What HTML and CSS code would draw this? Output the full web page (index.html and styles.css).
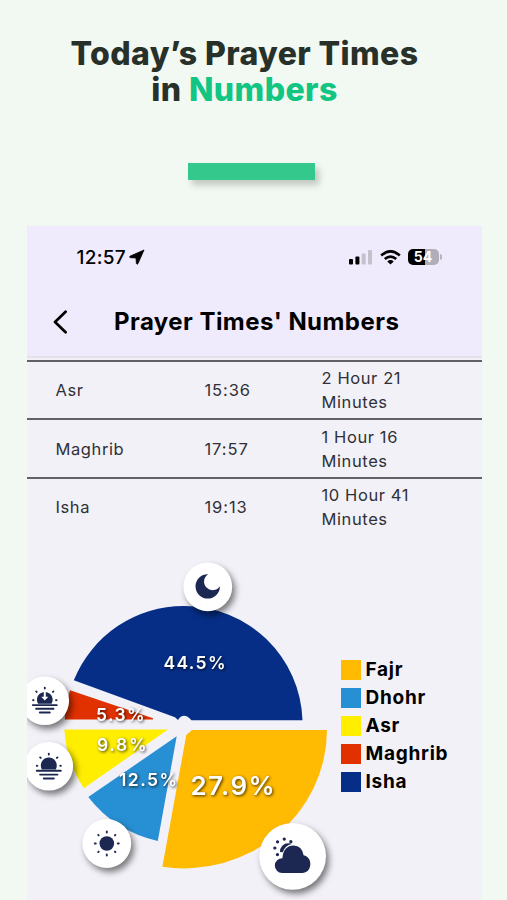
FILE: index.html
```html
<!DOCTYPE html>
<html lang="en">
<head>
<meta charset="UTF-8" />
<meta name="viewport" content="width=device-width, initial-scale=1" />
<title>Prayer Times' Numbers</title>
<link rel="stylesheet" href="styles.css">
</head>
<body>

<h1 class="headline">Today’s Prayer Times<br />in <span class="accent">Numbers</span></h1>
<div class="bar"></div>

<div class="phone">

  <div class="top">
    <div class="status">
      <div class="clock">
        <span>12:57</span>
        <svg width="16" height="16" viewBox="0 0 16 16"><path d="M15 1 L1 7.2 Q.2 8.4 1.4 8.7 L7 9 L7.4 14.6 Q8 15.9 8.9 14.7 Z" stroke="#000" stroke-width=".8" /></svg>
      </div>
      <div class="signals">
        <svg width="24" height="15" viewBox="0 0 24 15">
          <rect x="0" y="9" width="4" height="5.5" rx="1" />
          <rect x="6.4" y="6.5" width="4" height="8" rx="1" />
          <rect x="12.7" y="3.4" width="4" height="11.1" rx="1" fill="#c5c0ce" />
          <rect x="19" y="0" width="4" height="14.5" rx="1" fill="#c5c0ce" />
        </svg>
        <svg class="wifi" width="21" height="15" viewBox="0 0 21 15" fill="none" stroke="#000" stroke-width="2.7">
          <path d="M1.2 5.6 Q10.5 -2.8 19.8 5.6" />
          <path d="M4.8 9.1 Q10.5 4 16.2 9.1" />
          <path d="M7.3 11.4 Q10.5 8.8 13.7 11.4 L10.5 14.6 Z" fill="#000" stroke="none" />
        </svg>
        <div class="battery">54</div>
        <div class="battery-tip"></div>
      </div>
    </div>
    <div class="nav">
      <svg width="15" height="24" viewBox="0 0 15 24" fill="none" stroke="#000" stroke-width="2.7" stroke-linecap="round" stroke-linejoin="round"><path d="M12.6 1.8 L2 12 L12.6 22.2" /></svg>
      <h2>Prayer Times' Numbers</h2>
    </div>
  </div>

  <div class="times">
    <div class="row"><span>Asr</span><span class="hour">15:36</span><span>2 Hour 21<br />Minutes</span></div>
    <div class="row"><span>Maghrib</span><span class="hour">17:57</span><span>1 Hour 16<br />Minutes</span></div>
    <div class="row"><span>Isha</span><span class="hour">19:13</span><span>10 Hour 41<br />Minutes</span></div>
  </div>

  <div class="stats">
    <svg class="pie" width="310" height="360" viewBox="26 540 310 360">
      <!-- slices -->
      <path fill="#062e87" d="M302.5 720.3 A118.2 118.2 0 0 0 184.5 606 A118.4 118.4 0 0 0 73.8 680.3 L175 717.3 L178 720 Q183.5 711.5 191.5 720.3 Z" />
      <path fill="#e13100" d="M70 690.2 L153 718.2 V719.4 H64.7 Q65.4 704 70 690.2 Z" />
      <path fill="#ffee00" d="M64.4 729.5 H168 L83.8 788.3 Q66 761 64.4 729.5 Z" />
      <path fill="#278fd3" d="M176.7 736.3 L88.3 797 Q114.5 831 157.8 841 Z" />
      <path fill="#ffba02" d="M192 730 H327 A143 139 0 0 1 162.4 866.8 L186.3 735 Z" />

      <!-- percentages -->
      <g class="percent">
        <text x="163.5" y="668.5" textLength="62">44.5%</text>
        <text x="96" y="720.5" textLength="48.5">5.3%</text>
        <text x="97" y="750.5" textLength="49.5">9.8%</text>
        <text x="119" y="786" textLength="58">12.5%</text>
        <text class="big" x="190.5" y="794.5" textLength="84">27.9%</text>
      </g>

      <!-- moon -->
      <g transform="translate(207.8 586.8)">
        <circle class="badge" r="24.4" />
        <path class="ink" d="M.4 -12.6 A12.2 12.2 0 1 0 12.1 -.6 A8.6 8.6 0 1 1 .4 -12.6 Z" />
      </g>

      <!-- sunset -->
      <g transform="translate(44.8 700.8)">
        <circle class="badge" r="24.3" />
        <path class="ink" d="M-6.8 3 A7.9 7.9 0 1 1 6.8 3 Z" />
        <path d="M-1 -9 H1 V-4 H3.5 L0 -.2 L-3.5 -4 H-1 Z" fill="#fff" />
        <path class="stroke" d="M-12 4.3 H12 M-8.7 8 H8.7 M-5 11.7 H5" />
        <path class="rays" d="M0 -13.2 V-12.3 M-8.6 -9.4 L-8.1 -8.9 M8.6 -9.4 L8.1 -8.9 M-11.8 -.7 L-11.2 -.6 M11.8 -.7 L11.2 -.6" />
      </g>

      <!-- sun over horizon -->
      <g transform="translate(48.8 766.2)">
        <circle class="badge" r="24.3" />
        <path class="ink" d="M-7 3.2 A8 8 0 1 1 7 3.2 Z" />
        <path class="stroke" d="M-12 4.5 H12 M-8.7 8.4 H8.7 M-5 12.3 H5" />
        <path class="rays" d="M0 -12.6 V-11.7 M-8.6 -8.8 L-8.1 -8.3 M8.6 -8.8 L8.1 -8.3 M-12 -.4 L-11.4 -.3 M12 -.4 L11.4 -.3" />
      </g>

      <!-- sun -->
      <g transform="translate(106.8 843.5)">
        <circle class="badge" r="24.4" />
        <circle class="ink" r="7.3" />
        <path class="rays" d="M0 -12 V-11 M0 12 V11 M-12 0 H-11 M12 0 H11 M-8.6 -8.6 L-8.1 -8.1 M8.6 -8.6 L8.1 -8.1 M-8.6 8.6 L-8.1 8.1 M8.6 8.6 L8.1 8.1" />
      </g>

      <!-- cloud and sun -->
      <g transform="translate(292.6 856.3)">
        <circle class="badge" r="33.4" />
        <path class="ink" d="M-10.5 16.8 A7.4 7.4 0 0 1 -10.2 2 Q-9.2 -10.5 1 -10.7 Q9.3 -10.5 11 -1 C20.5 .5 20 16.8 9.5 16.8 Z" />
        <path class="ink" d="M-12.6 -4.2 A8.2 8.2 0 0 1 -4 -13 Q-2 -13 -.8 -12.2 Q-7.5 -11 -9.8 -4 Z" />
        <path class="rays dots" d="M-15.2 -1.7 h.1 M-17.8 -8.3 h.1 M-15.1 -14.5 h.1 M-8.4 -17.2 h.1 M-1.8 -14.6 h.1" />
      </g>
    </svg>

    <ul class="legend">
      <li><i class="fajr"></i>Fajr</li>
      <li><i class="dhohr"></i>Dhohr</li>
      <li><i class="asr"></i>Asr</li>
      <li><i class="maghrib"></i>Maghrib</li>
      <li><i class="isha"></i>Isha</li>
    </ul>
  </div>

</div>

</body>
</html>
```
FILE: styles.css
```css
* {
  box-sizing: border-box;
}
body {
  margin: 0;
  height: 900px;
  overflow: hidden;
  background: #f2f8f2;
  color: #000;
  font-family: Inter, "Liberation Sans", sans-serif;
}
svg {
  display: block;
  flex: none;
}
.headline {
  margin: 0;
  padding: 36px 18px 0 0;
  height: 163px;
  color: #273129;
  font-size: 32px;
  font-weight: 800;
  line-height: 36px;
  letter-spacing: 0.4px;
  text-align: center;
  white-space: nowrap;
}
.accent {
  color: #12c582;
}
.bar {
  width: 127px;
  height: 17px;
  margin: 0 0 46px 188px;
  background: #34c88d;
  box-shadow: 4px 5px 6px rgba(80, 90, 80, 0.3);
}
.phone {
  width: 455px;
  height: 674px;
  margin-left: 26.5px;
  background: #f2f1f8;
  overflow: hidden;
}
.top {
  height: 132px;
  background: #efeafc;
  border-bottom: 2px solid #e5e1ec;
}
.status {
  display: flex;
  justify-content: space-between;
  padding: 19px 40px 0 50px;
  height: 70px;
}
.clock, .signals {
  display: flex;
  align-items: center;
  height: 24px;
}
.clock {
  gap: 3px;
  font-size: 19px;
  font-weight: 500;
  letter-spacing: 0.3px;
}
.wifi {
  margin: 0 7px 0 7px;
}
.battery {
  width: 31px;
  height: 16px;
  border-radius: 5px;
  background: linear-gradient(90deg, #000 55%, #b1adb9 55%);
  color: #fff;
  font-size: 14px;
  font-weight: 700;
  line-height: 16.5px;
  text-align: center;
}
.battery-tip {
  width: 2px;
  height: 6px;
  margin-left: 1px;
  border-radius: 0 2px 2px 0;
  background: #b9b4c2;
}
.nav {
  display: flex;
  align-items: center;
  height: 52px;
  padding-left: 26px;
}
.nav h2 {
  margin: -2px 0 0 46.5px;
  font-size: 24px;
  font-weight: 700;
  letter-spacing: 0.45px;
  white-space: nowrap;
}
.times {
  padding-top: 2px;
}
.row {
  display: grid;
  grid-template-columns: 149px 117px 1fr;
  align-items: center;
  height: 58.4px;
  padding: 0 0 0 29px;
  border-top: 2px solid #626169;
  color: #303036;
  font-size: 16.5px;
  line-height: 24px;
  letter-spacing: 0.6px;
}
.hour {
  letter-spacing: 0.9px;
}
.stats {
  display: flex;
  margin-top: 5px;
}
.pie {
  margin-left: -0.5px;
}
.percent {
  fill: #fff;
  font-size: 17.5px;
  font-weight: 600;
  filter: drop-shadow(1px 1px 1.5px rgba(0, 0, 0, 0.75));
}
.percent .big {
  font-size: 26px;
}
.badge {
  fill: #fff;
  filter: drop-shadow(3px 4px 3px rgba(0, 0, 0, 0.5));
}
.ink {
  fill: #1c2752;
}
.stroke, .rays {
  fill: none;
  stroke: #1c2752;
  stroke-width: 1.9;
  stroke-linecap: round;
}
.dots {
  stroke-width: 3.2;
}
.legend {
  display: flex;
  flex-direction: column;
  margin: 115.5px 0 0 4.5px;
  padding: 0;
  list-style: none;
}
.legend li {
  display: flex;
  align-items: center;
  gap: 5px;
  height: 28px;
  font-size: 19px;
  font-weight: 700;
  letter-spacing: 0.75px;
}
.legend i {
  width: 20px;
  height: 20px;
}
.fajr {
  background: #ffba02;
}
.dhohr {
  background: #278fd3;
}
.asr {
  background: #ffee00;
}
.maghrib {
  background: #e13100;
}
.isha {
  background: #062e87;
}
```
